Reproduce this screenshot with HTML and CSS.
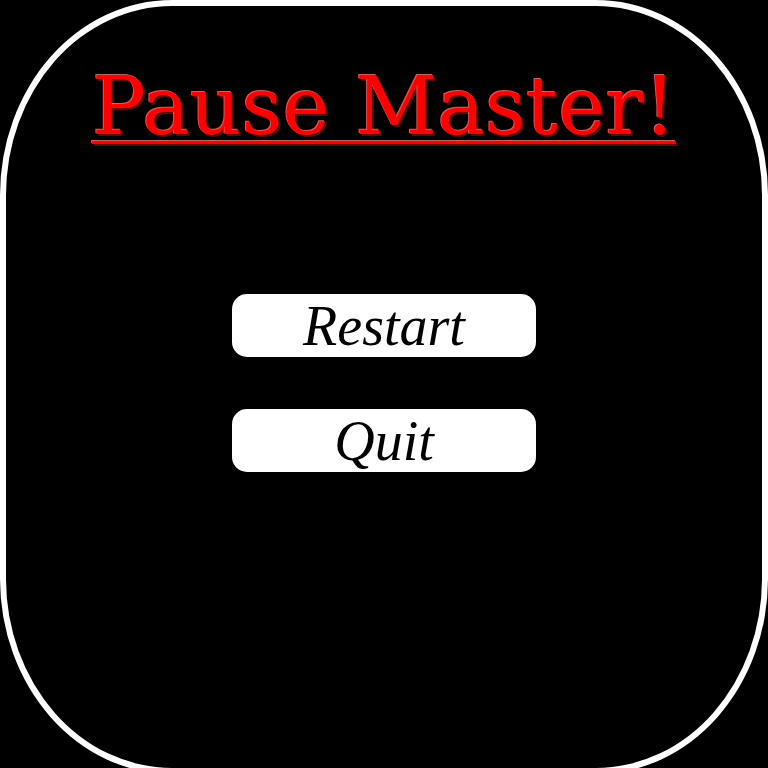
FILE: index.html
```html
<!DOCTYPE html>
<html lang="en">
<head>
<meta charset="utf-8">
<title>Pause Master!</title>
<link rel="stylesheet" href="styles.css">
</head>
<body>
  <div class="frame">
    <h1 class="title">Pause Master!</h1>
    <div class="menu">
      <button class="btn">Restart</button>
      <button class="btn">Quit</button>
    </div>
  </div>
</body>
</html>
```
FILE: styles.css
```css
html, body {
  margin: 0;
  padding: 0;
  background: #000;
  overflow: hidden;
  height: 768px;
}
.frame {
  box-sizing: border-box;
  width: 768px;
  height: 774px;
  border: 6px solid #fff;
  border-radius: 172px / 195px;
  display: flex;
  flex-direction: column;
  align-items: center;
}
.title {
  margin: 51px 0 0;
  font-family: "DejaVu Serif", serif;
  font-weight: normal;
  font-size: 80px;
  line-height: 100px;
  color: #f00;
  text-decoration: underline;
  text-decoration-thickness: 3px;
  text-underline-offset: 7px;
  text-shadow: -1px -1px 0 rgba(255, 150, 150, 0.7), 2px 2px 0 #6a0000;
}
.menu {
  margin-top: 137px;
  display: flex;
  flex-direction: column;
  gap: 52px;
}
.btn {
  width: 304px;
  height: 63px;
  border: none;
  border-radius: 15px;
  background: #fff;
  color: #000;
  font-family: "Liberation Serif", serif;
  font-style: italic;
  font-size: 56px;
  line-height: 60px;
  padding: 0;
}
```
